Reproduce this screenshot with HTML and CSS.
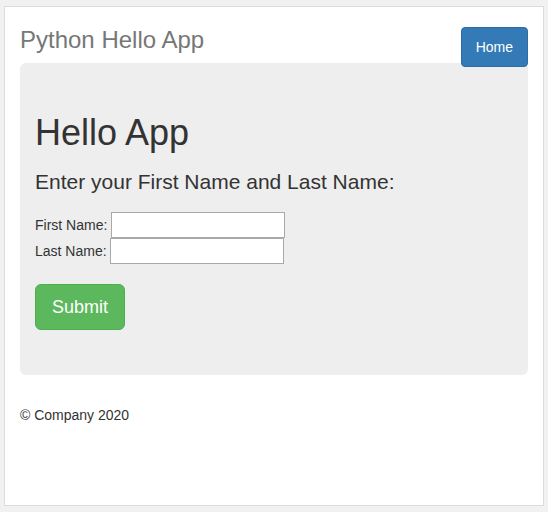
FILE: index.html
```html
<!DOCTYPE html>
<html>
<head>
<meta charset="utf-8">
<title>Python Hello App</title>
<link rel="stylesheet" href="styles.css">
</head>
<body>
<div class="page">
  <div class="header">
    <h3 class="brand">Python Hello App</h3>
    <a class="btn btn-home" href="#">Home</a>
  </div>
  <div class="jumbotron">
    <h1 class="title">Hello App</h1>
    <p class="lead">Enter your First Name and Last Name:</p>
    <form class="form">
      <div class="row"><label>First Name:</label> <input type="text" class="field"></div>
      <div class="row"><label>Last Name:</label> <input type="text" class="field"></div>
      <button type="button" class="btn btn-submit">Submit</button>
    </form>
  </div>
  <footer class="footer">
    <p class="copy">© Company 2020</p>
  </footer>
</div>
</body>
</html>
```
FILE: styles.css
```css
html, body {
  margin: 0;
  padding: 0;
}
body {
  background: #f1f1f1;
  font-family: "Liberation Sans", Arial, Helvetica, sans-serif;
  font-size: 14px;
  line-height: 20px;
  color: #333;
}
.page {
  box-sizing: border-box;
  margin: 6px 0 0 4px;
  width: 540px;
  height: 500px;
  background: #fff;
  border: 1px solid #dcdcdc;
  padding: 20px 15px 0 15px;
}
.header {
  display: flex;
  justify-content: space-between;
  align-items: flex-start;
  height: 36px;
}
.brand {
  margin: 0;
  font-size: 24px;
  line-height: 26px;
  font-weight: normal;
  color: #777;
}
.btn {
  display: inline-block;
  box-sizing: border-box;
  text-decoration: none;
  font-family: inherit;
  cursor: pointer;
}
.btn-home {
  position: relative;
  z-index: 1;
  height: 40px;
  padding: 9px 14px;
  font-size: 14px;
  line-height: 20px;
  color: #fff;
  background: #337ab7;
  border: 1px solid #2e6da4;
  border-radius: 4px;
}
.jumbotron {
  height: 312px;
  box-sizing: border-box;
  background: #eee;
  border-radius: 6px;
  padding: 30px 15px;
}
.title {
  margin: 20px 0 14px;
  font-size: 36px;
  line-height: 39.6px;
  font-weight: 500;
  color: #333;
}
.lead {
  margin: 0 0 15px;
  font-size: 21px;
  line-height: 30px;
  font-weight: 200;
}
.form {
  margin: 0;
}
.row {
  height: 26px;
  line-height: 26px;
  white-space: nowrap;
}
.row label {
  font-size: 14px;
  vertical-align: top;
}
.field {
  box-sizing: border-box;
  width: 174px;
  height: 26px;
  margin: 0;
  padding: 1px 2px;
  border: 1px solid #a9a9a9;
  background: #fff;
  font-family: inherit;
  font-size: 13px;
  vertical-align: top;
}
.btn-submit {
  margin-top: 20px;
  height: 46px;
  padding: 10px 16px;
  font-size: 18px;
  line-height: 24px;
  color: #fff;
  background: #5cb85c;
  border: 1px solid #4cae4c;
  border-radius: 6px;
}
.footer {
  padding-top: 30px;
}
.copy {
  margin: 0;
  font-size: 14px;
  line-height: 20px;
  color: #333;
}
```
